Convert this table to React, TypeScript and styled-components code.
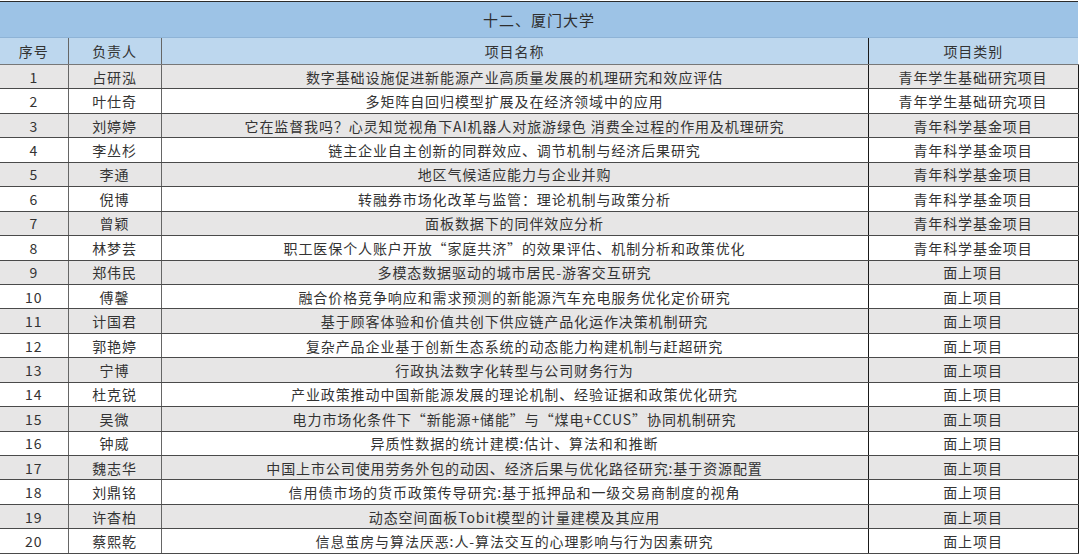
import React from 'react';
import styled, { createGlobalStyle } from 'styled-components';

const GlobalStyle = createGlobalStyle`
  html, body {
    margin: 0;
    padding: 0;
    background: #ffffff;
  }
  body {
    font-family: "Noto Sans CJK SC", "Noto Sans", sans-serif;
    color: #333333;
  }
`;

const Sheet = styled.div`
  width: 1078px;
  padding-top: 1px;
`;

const Table = styled.table`
  width: 1078px;
  border-collapse: collapse;
  table-layout: fixed;
`;

const TitleCell = styled.th`
  height: 35px;
  padding: 0;
  background: #9dc3e6;
  border-top: 1px solid #2b2b2b;
  border-bottom: 1px solid #8eb3d6;
  font-size: 15px;
  font-weight: 400;
  letter-spacing: 1px;
  color: #2e2e2e;
  text-align: center;
`;

const HeadCell = styled.th<{ $dark?: boolean; $last?: boolean }>`
  height: 26px;
  padding: 0;
  background: #bdd7ee;
  font-size: 14px;
  font-weight: 400;
  letter-spacing: 0.9px;
  color: #333333;
  text-align: center;
  border-right: ${p => (p.$last ? 'none' : p.$dark ? '1px solid #1a1a1a' : '1.5px solid #666666')};
  border-bottom: 1px solid #777777;
`;

const Row = styled.tr<{ $shaded: boolean }>`
  background: ${p => (p.$shaded ? '#e7e6e6' : '#ffffff')};
`;

const Cell = styled.td<{ $dark?: boolean; $last?: boolean }>`
  height: 23.45px;
  padding: 0;
  font-size: 14px;
  letter-spacing: 0.9px;
  line-height: 18px;
  color: #333333;
  text-align: center;
  white-space: nowrap;
  overflow: hidden;
  border-bottom: 1.5px solid #4a4a4a;
  border-right: ${p => (p.$last ? '1.5px solid #1a1a1a' : p.$dark ? '1.5px solid #1a1a1a' : '1.5px solid #666666')};
`;

type Project = {
  leader: string;
  title: string;
  kind: string;
};

const projects: Project[] = [
  { leader: '占研泓', title: '数字基础设施促进新能源产业高质量发展的机理研究和效应评估', kind: '青年学生基础研究项目' },
  { leader: '叶仕奇', title: '多矩阵自回归模型扩展及在经济领域中的应用', kind: '青年学生基础研究项目' },
  { leader: '刘婷婷', title: '它在监督我吗？心灵知觉视角下AI机器人对旅游绿色 消费全过程的作用及机理研究', kind: '青年科学基金项目' },
  { leader: '李丛杉', title: '链主企业自主创新的同群效应、调节机制与经济后果研究', kind: '青年科学基金项目' },
  { leader: '李通', title: '地区气候适应能力与企业并购', kind: '青年科学基金项目' },
  { leader: '倪博', title: '转融券市场化改革与监管：理论机制与政策分析', kind: '青年科学基金项目' },
  { leader: '曾颖', title: '面板数据下的同伴效应分析', kind: '青年科学基金项目' },
  { leader: '林梦芸', title: '职工医保个人账户开放“家庭共济”的效果评估、机制分析和政策优化', kind: '青年科学基金项目' },
  { leader: '郑伟民', title: '多模态数据驱动的城市居民-游客交互研究', kind: '面上项目' },
  { leader: '傅馨', title: '融合价格竞争响应和需求预测的新能源汽车充电服务优化定价研究', kind: '面上项目' },
  { leader: '计国君', title: '基于顾客体验和价值共创下供应链产品化运作决策机制研究', kind: '面上项目' },
  { leader: '郭艳婷', title: '复杂产品企业基于创新生态系统的动态能力构建机制与赶超研究', kind: '面上项目' },
  { leader: '宁博', title: '行政执法数字化转型与公司财务行为', kind: '面上项目' },
  { leader: '杜克锐', title: '产业政策推动中国新能源发展的理论机制、经验证据和政策优化研究', kind: '面上项目' },
  { leader: '吴微', title: '电力市场化条件下“新能源+储能”与“煤电+CCUS”协同机制研究', kind: '面上项目' },
  { leader: '钟威', title: '异质性数据的统计建模:估计、算法和和推断', kind: '面上项目' },
  { leader: '魏志华', title: '中国上市公司使用劳务外包的动因、经济后果与优化路径研究:基于资源配置', kind: '面上项目' },
  { leader: '刘鼎铭', title: '信用债市场的货币政策传导研究:基于抵押品和一级交易商制度的视角', kind: '面上项目' },
  { leader: '许杳柏', title: '动态空间面板Tobit模型的计量建模及其应用', kind: '面上项目' },
  { leader: '蔡熙乾', title: '信息茧房与算法厌恶:人-算法交互的心理影响与行为因素研究', kind: '面上项目' },
];

const App = () => {
  return (
    <Sheet>
      <GlobalStyle />
      <Table>
        <colgroup>
          <col style={{ width: 68 }} />
          <col style={{ width: 93 }} />
          <col style={{ width: 707 }} />
          <col style={{ width: 210 }} />
        </colgroup>
        <thead>
          <tr>
            <TitleCell colSpan={4}>十二、厦门大学</TitleCell>
          </tr>
          <tr>
            <HeadCell>序号</HeadCell>
            <HeadCell>负责人</HeadCell>
            <HeadCell $dark>项目名称</HeadCell>
            <HeadCell $last>项目类别</HeadCell>
          </tr>
        </thead>
        <tbody>
          {projects.map((p, i) => (
            <Row key={i} $shaded={i % 2 === 0}>
              <Cell>{i + 1}</Cell>
              <Cell>{p.leader}</Cell>
              <Cell $dark>{p.title}</Cell>
              <Cell $last>{p.kind}</Cell>
            </Row>
          ))}
        </tbody>
      </Table>
    </Sheet>
  );
};

export default App;
